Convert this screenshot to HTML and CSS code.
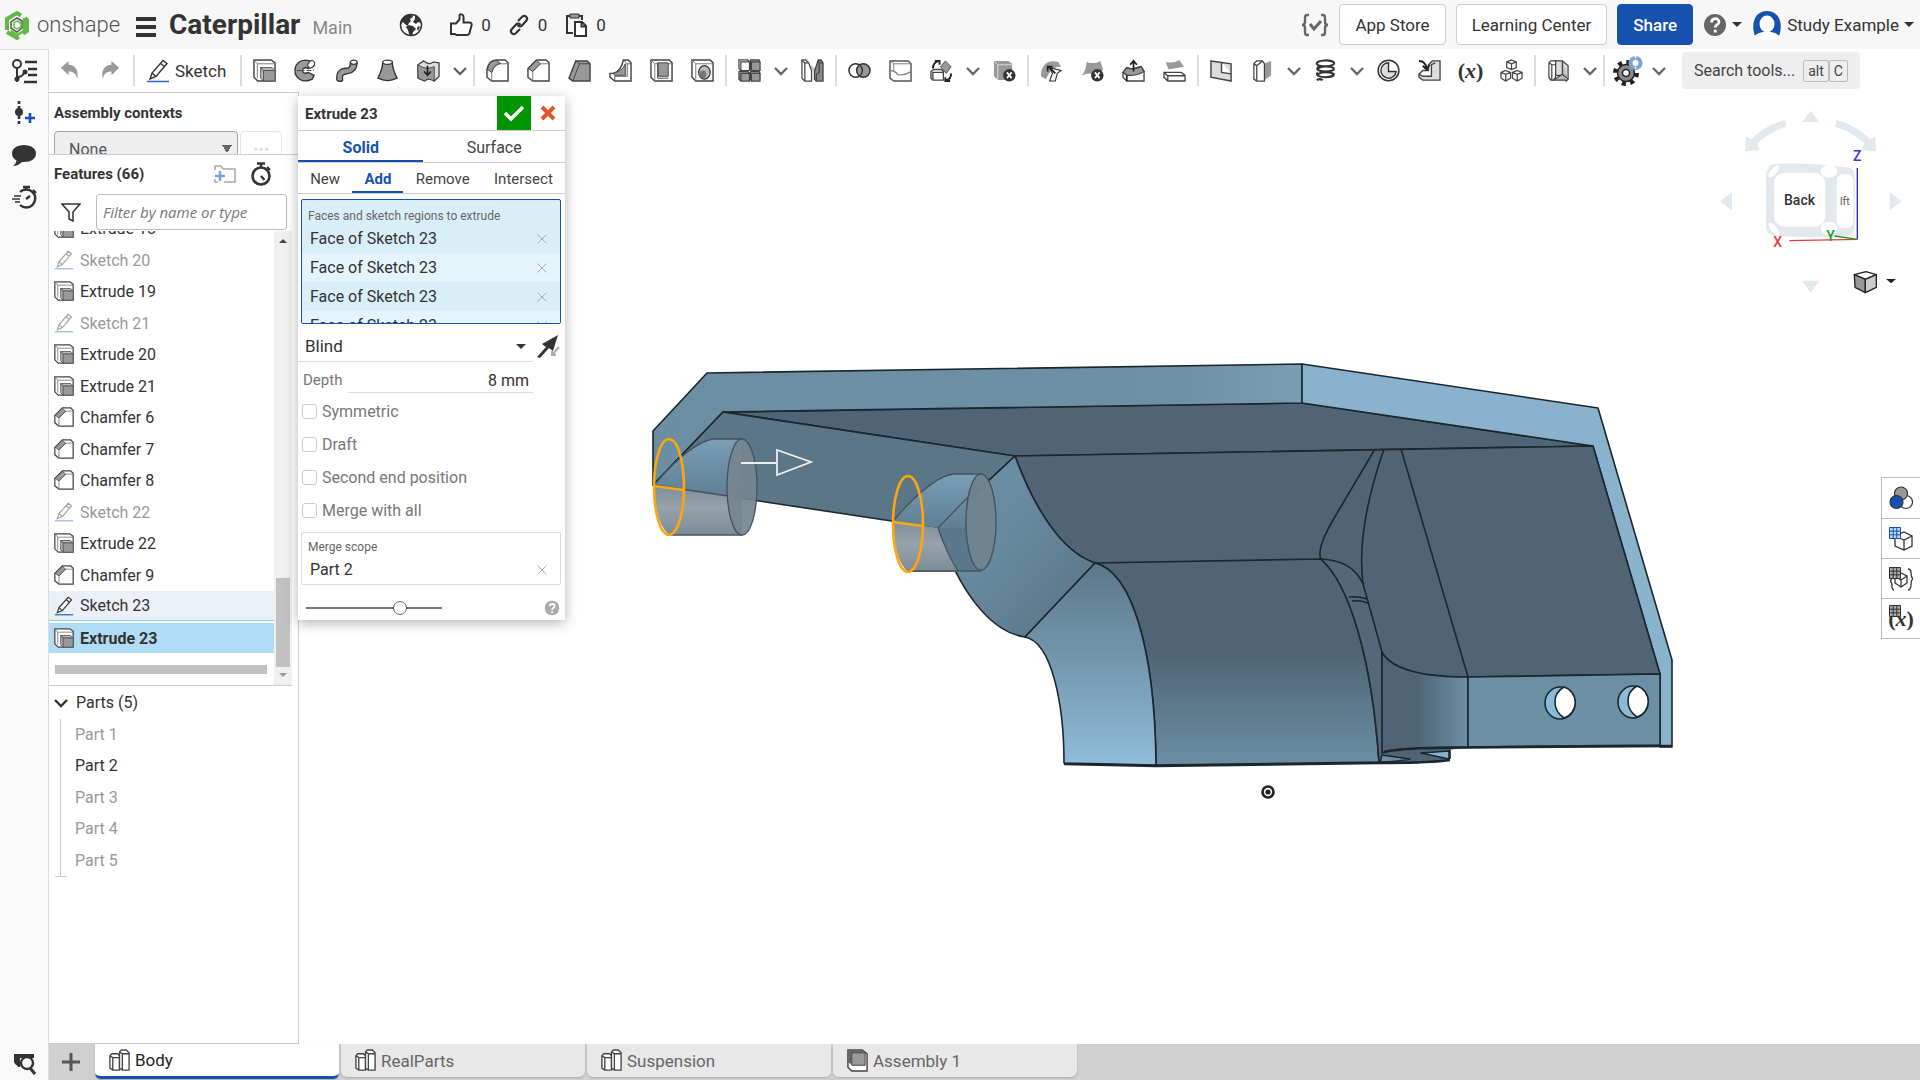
FILE: index.html
```html
<!DOCTYPE html>
<html lang="en">
<head>
    <meta charset="UTF-8" />
    <meta name="viewport" content="width=device-width, initial-scale=1" />
    <title>Caterpillar | Body</title>
    <link rel="stylesheet" href="styles.css">
</head>
<body>
    <!-- shared icons -->
    <svg class="sprite" aria-hidden="true">
        <symbol id="i-chevron" viewBox="0 0 14 14"><path d="M1 4l6 6 6-6" fill="none" stroke="#666" stroke-width="2.4"/></symbol>
        <symbol id="i-sketch" viewBox="0 0 24 24"><path d="M1 22.5h22" stroke="#3b6cc4" stroke-width="1.6"/><path d="M4 20l2-6L17 1.500l4 3L10 17.500zM6 14l4 3.500M14.500 4.500l4 3" fill="#fff" stroke="#333" stroke-width="1.400"/></symbol>
        <symbol id="i-extrude" viewBox="0 0 24 24"><path d="M1 1h18l4 3v19H5l-4-4z" fill="#fff" stroke="#444" stroke-width="1.5"/><path d="M4.500 20V5H23M1 1l3.500 4" fill="none" stroke="#777"/><path d="M8 9l3 3v11l-3-3zM8 9h12l3 3H11z" fill="#bbb" stroke="#555"/><path d="M11 12h12v11H11z" fill="#999" stroke="#555"/></symbol>
        <symbol id="i-chamfer" viewBox="0 0 24 24"><path d="M1 10L10 1h10l3 3v19H6l-5-4z" fill="#fff" stroke="#444" stroke-width="1.500"/><path d="M6 23V13l8-8h9" fill="none" stroke="#777"/><path d="M1.500 10L10 1.500l4 3.500-8 8z" fill="#999" stroke="#444"/></symbol>
        <symbol id="i-part" viewBox="0 0 24 24"><path d="M2 7l2-2h6l2 2v15H5l-3-2zM2 7l3 2h7M5 9v13" fill="#fff" stroke="#444" stroke-width="1.4"/><path d="M12 3l2-2h5l3 3v18h-7l-3-2zM12 3l3 2h7M15 5v17" fill="#fff" stroke="#444" stroke-width="1.400"/></symbol>
        <symbol id="i-stopwatch" viewBox="0 0 24 24"><circle cx="12" cy="14" r="8.500" fill="none" stroke="#333" stroke-width="2.600"/><path d="M8 1.500h8M12 2v4M18 5l3 3M12 14l3.500 4" stroke="#333" stroke-width="2.400"/></symbol>
        <symbol id="i-help" viewBox="0 0 24 24"><circle cx="12" cy="12" r="11"/><path d="M8.500 9.500c0-5 7.500-5 7.500-.5 0 2.800-3.800 2.500-3.800 5.500M12.200 16.800v2.600" fill="none" stroke="#fff" stroke-width="2.700"/></symbol>
        <symbol id="i-x" viewBox="0 0 12 12"><path d="M1.500 1.500l9 9M10.500 1.500l-9 9" fill="none" stroke="currentColor"/></symbol>
        <symbol id="i-grid" viewBox="0 0 12 12"><path d="M.5.5h11v11H.5zM.5 4.200h11M.5 7.800h11M4.200.5v11M7.800.5v11" stroke-width="1"/></symbol>
    </svg>

    <header class="header">
        <a class="brand" href="#" aria-label="onshape">
            <svg width="24" height="32" viewBox="0 0 24 32" fill="none"><path d="M2 21V10L12 4l4 2.500M20 9l2 2v11l-4 2.500M14 28l-2 1-10-6" stroke="#61b846" stroke-width="4"/><path d="M19 9v13l-7 4-6-4" stroke="#61b846" stroke-width="2.500"/><path d="M6 19v-6l6-4 5 3v7l-5 4z" stroke="#555" stroke-width="1.500"/><path d="M12 12l4 2v4l-4 2-3-2v-4z" stroke="#61b846" stroke-width="1.500"/></svg>
            <span>onshape</span>
        </a>
        <button class="menu-btn" aria-label="Document menu"><i></i><i></i><i></i></button>
        <h1>Caterpillar</h1>
        <span class="branch">Main</span>
        <div class="stats">
            <svg class="globe" width="24" height="24" viewBox="0 0 24 24"><circle cx="12" cy="12" r="10.500" fill="#fff" stroke="#333" stroke-width="1.500"/><path d="M4 5c3-3 6-4 9-3l1 2-3 2 1 2-3 3 1 2-3-1-3-3-2 2-1-2zM16 2c4 2 6 5 6 8l-3-1-2 2-3-2 2-3zM9 12l5 1 3 3-3 3-1 4-3-2-1-4-2-3zM19 13l2 1-2 4-1-2z" fill="#333"/></svg>
            <button class="stat"><svg width="24" height="24" viewBox="0 0 24 24"><path d="M2 10.500h5l3.500-4V2.500c0-2 4-1.500 4 1.500v5.500h6c2 0 2.500 1.500 2 3l-2 7.500c-.5 1.500-1.500 2-3 2H7.500L6 21H2z" fill="#fff" stroke="#333" stroke-width="2"/></svg>0</button>
            <button class="stat"><svg width="22" height="24" viewBox="0 0 22 24"><g fill="none" stroke="#333" stroke-width="2.200"><path d="M10 8l4.500-4.500c2.500-2 6 1.500 4 4L14 12.500c-1.500 1.500-3.500 1-4.500-.5"/><path d="M12 16l-4.500 4.500c-2.500 2-6-1.500-4-4L8 11.500c1.500-1.500 3.500-1 4.500.5"/></g></svg>0</button>
            <button class="stat"><svg width="24" height="24" viewBox="0 0 24 24"><path d="M7 3H3v17h6M14 3h4v4" fill="none" stroke="#333" stroke-width="2"/><path d="M6 1h9v4H6z" fill="#999" stroke="#333"/><path d="M11 9h7l4 4v10H11zM17.500 9v4.500H22" fill="#fff" stroke="#333" stroke-width="2"/></svg>0</button>
        </div>
        <div class="header-right">
            <svg width="28" height="24" viewBox="0 0 28 24" fill="none" stroke="#666" stroke-width="2.400"><path d="M8 2H6Q4 2 4 5v4q0 3-3 3 3 0 3 3v4q0 3 2 3h2M20 2h2q2 0 2 3v4q0 3 3 3-3 0-3 3v4q0 3-2 3h-2"/><path d="M9 11l4 5 7-8" stroke-width="3"/></svg>
            <button class="btn">App Store</button>
            <button class="btn">Learning Center</button>
            <button class="btn btn-primary">Share</button>
            <button class="help" aria-label="Help"><svg width="24" height="24" fill="#666"><use href="#i-help"/></svg><b class="caret"></b></button>
            <button class="user"><svg width="30" height="30" viewBox="0 0 30 30"><path d="M3 26C-2 12 4 1 15 1s17 11 12 25z" fill="#1651b0"/><ellipse cx="15" cy="14" rx="7.500" ry="8.500" fill="#fff"/><path d="M2 27c4-7 22-7 26 0q-13 6-26 0z" fill="#fff"/></svg>Study Example<b class="caret"></b></button>
        </div>
    </header>

    <div class="shell">
        <nav class="rail" aria-label="Panels">
            <button aria-label="Feature list"><svg width="26" height="26" viewBox="0 0 26 26" fill="none" stroke="#333" stroke-width="2"><circle cx="6" cy="6" r="4"/><path d="M6 10v14M6 19c5 0 6-2 7-4"/><circle cx="6" cy="21" r="1.500" fill="#333"/><circle cx="14" cy="14" r="1.500" fill="#333"/><path d="M14 4h12M17 11h9M17 17h9M13 24h13" stroke-width="2.600"/></svg></button>
            <button aria-label="Insert"><svg width="26" height="26" viewBox="0 0 26 26"><path d="M8 1v24" stroke="#333" stroke-width="2.600" stroke-dasharray="3 2"/><circle cx="8" cy="12" r="4" fill="#333"/><path d="M14 18h10M19 13v10" stroke="#1651b0" stroke-width="2.600"/></svg></button>
            <button aria-label="Comments"><svg width="26" height="26" viewBox="0 0 26 26"><path d="M13 3c7 0 12 3.500 12 8.500S20 20 13 20h-2c-2 2-5 4-9 4 2-1 3-3 3.500-5.500C3 17 1 15 1 11.500 1 6.500 6 3 13 3z" fill="#333"/></svg></button>
            <button aria-label="History"><svg width="26" height="26" viewBox="0 0 26 26" fill="none" stroke="#333" stroke-width="2.400"><path d="M9 8a9 9 0 1 1 0 13"/><path d="M12 3h7M15 3v3M22 6l3 3M15 15l4-3"/><path d="M3 12h7M1 15h8M4 18h5" stroke-width="1.400"/></svg></button>
            <button class="rail-bottom" aria-label="Find"><svg width="24" height="24" viewBox="0 0 24 24"><path d="M2 3h20v4H8v9H6c0-2-4-2-4-6z" fill="#333"/><circle cx="15" cy="12" r="6" fill="#fafafa" stroke="#333" stroke-width="2.400"/><path d="M18 17l5 6" stroke="#333" stroke-width="3"/></svg></button>
        </nav>

        <div class="content">
            <div class="toolbar">
                <button class="tool"><svg viewBox="0 0 24 24"><path d="M3 9l8-7v4c7 0 11 6 9 15-1-6-4-8-9-8v4z" fill="#999"/></svg></button>
                <button class="tool"><svg viewBox="0 0 24 24"><path d="M21 9l-8-7v4C6 6 2 12 4 21c1-6 4-8 9-8v4z" fill="#999"/></svg></button>
                <span class="sep"></span>
                <button class="tool-sketch"><svg width="24" height="24"><use href="#i-sketch"/></svg>Sketch</button>
                <span class="sep"></span>
                <button class="tool"><svg><use href="#i-extrude"/></svg></button>
                <button class="tool"><svg viewBox="0 0 24 24"><path d="M19 3C9-2 1 4 1 12s8 14 18 9l2-4-6-3c-4 2-6 0-6-2s2-4 6-2l6-3z" fill="#999" stroke="#333" stroke-width="1.400"/><ellipse cx="18" cy="5.500" rx="3" ry="4" fill="#fff" stroke="#333" transform="rotate(40 18 5.500)"/><path d="M3 12h20" stroke="#444" stroke-dasharray="5 2 1 2"/></svg></button>
                <button class="tool"><svg viewBox="0 0 24 24"><path d="M16 4c0 7-3 5-8 6-5 2-7 5-6 12 2 2 5 2 6 0-1-6 1-6 6-7 6-1 9-4 9-11z" fill="#999" stroke="#333" stroke-width="1.400"/><ellipse cx="19.500" cy="3.500" rx="3.500" ry="2.200" fill="#fff" stroke="#333" stroke-width="1.300"/></svg></button>
                <button class="tool"><svg viewBox="0 0 24 24"><path d="M7 3c0 6-2 11-5 17q10 5 20 0C19 14 17 9 17 3z" fill="#999" stroke="#333" stroke-width="1.400"/><ellipse cx="12" cy="3.500" rx="5" ry="2.200" fill="#fff" stroke="#333" stroke-width="1.300"/></svg></button>
                <button class="tool"><svg viewBox="0 0 24 24"><path d="M1 6l6-4q6 5 10 1l6 1v14l-5 5q-6-4-10 0l-7-3z" fill="#ddd" stroke="#444" stroke-width="1.400"/><path d="M1 6q8 6 17 2v15q-8-4-10 0l-7-3z" fill="#999" stroke="#444"/><path d="M11 7v10M7.500 13l3.500 4 3.500-4" fill="none" stroke="#222" stroke-width="1.800"/></svg></button>
                <button class="more"><svg><use href="#i-chevron"/></svg></button>
                <span class="sep"></span>
                <button class="tool"><svg viewBox="0 0 24 24"><path d="M1 11Q3 1 11 1h9l3 3v19H6l-5-4z" fill="#fff" stroke="#444" stroke-width="1.500"/><path d="M6 23V14q2-8 9-9h8" fill="none" stroke="#777"/><path d="M1.500 11Q3 1.500 11 1.500l4 3Q8 6 6 14z" fill="#999" stroke="#444"/></svg></button>
                <button class="tool"><svg><use href="#i-chamfer"/></svg></button>
                <button class="tool"><svg viewBox="0 0 24 24"><path d="M1 20L8 2h12l3 3v18H5z" fill="#999" stroke="#444" stroke-width="1.500"/><path d="M5 23L12 5h11M8 2l4 3" fill="none" stroke="#444"/></svg></button>
                <button class="tool"><svg viewBox="0 0 24 24"><path d="M15 1h5l3 3v19H6l-5-4v-4h4Q13 12 15 1z" fill="#fff" stroke="#444" stroke-width="1.500"/><path d="M17 5v12H6l-2-2Q14 13 17 5z" fill="#999" stroke="#444"/><path d="M6 23v-5h13V5h4M15 1l4 4" fill="none" stroke="#555"/></svg></button>
                <button class="tool"><svg viewBox="0 0 24 24"><path d="M1 1h19l3 3v19H5l-4-4z" fill="#fff" stroke="#444" stroke-width="1.500"/><path d="M5 23V5h18M1 1l4 4" fill="none" stroke="#777"/><path d="M8 4h11v14H9z" fill="#999" stroke="#444"/><path d="M8 4v16h11" fill="none" stroke="#444"/></svg></button>
                <button class="tool"><svg viewBox="0 0 24 24"><path d="M1 1h19l3 3v19H5l-4-4z" fill="#fff" stroke="#444" stroke-width="1.500"/><path d="M5 23V5h18M1 1l4 4" fill="none" stroke="#777"/><ellipse cx="14" cy="14" rx="6" ry="7" fill="#bbb" stroke="#333" stroke-width="1.300"/><ellipse cx="12.500" cy="16" rx="3.500" ry="4" fill="#777"/></svg></button>
                <span class="sep"></span>
                <button class="tool"><svg viewBox="0 0 24 24" stroke="#444" stroke-width="1.300"><path d="M1 1h9l2 2v9H3l-2-2z" fill="#fff"/><path d="M13 1h9l1 2v9H14l-1-2zM1 13h9l2 2v8H3l-2-2zM13 13h9l1 2v8h-9l-1-2z" fill="#999"/><path d="M3 12V3h9M14 12V3h9M3 23v-8h9M14 23v-8h9" fill="none"/></svg></button>
                <button class="more"><svg><use href="#i-chevron"/></svg></button>
                <button class="tool"><svg viewBox="0 0 24 24" stroke="#444" stroke-width="1.300"><path d="M10 6l7 6v4l-6-5z" fill="#ccc" stroke="none"/><path d="M1 1h4l3 3 3 8v11H4l-3-3z" fill="#fff"/><path d="M4 23V4M1 1l3 3h4" fill="none"/><path d="M18 1h3l2 3v19h-7l-2-2v-8z" fill="#888"/><path d="M18 1l1 3v10l-3 2v7M19 4h4" fill="none"/></svg></button>
                <span class="sep"></span>
                <button class="tool"><svg viewBox="0 0 24 24"><circle cx="8" cy="12" r="7" fill="#fff"/><circle cx="16" cy="12" r="7" fill="#999" stroke="#333" stroke-width="1.600"/><circle cx="8" cy="12" r="7" fill="none" stroke="#333" stroke-width="1.600"/></svg></button>
                <button class="tool"><svg viewBox="0 0 24 24"><path d="M1 2h19l3 3v18H5l-4-3z" fill="#fff" stroke="#555" stroke-width="1.500"/><path d="M1 2l4 3h18M5 5v7" fill="none" stroke="#777"/><path d="M1 12q5 0 8 4 6 2 14-3" fill="none" stroke="#888" stroke-width="1.500"/></svg></button>
                <button class="tool"><svg viewBox="0 0 24 24"><path d="M1 13l3-2h8l2 2v9H3l-2-2zM3 22v-8h11" fill="#fff" stroke="#444" stroke-width="1.400"/><path d="M16 2l6 6-5 7-6-7z" fill="#999" stroke="#555"/><path d="M3 10Q3 4 9 2M5 2h5v4M22 15q0 6-5 7M21 23h-5v-4" fill="none" stroke="#222" stroke-width="2"/></svg></button>
                <button class="more"><svg><use href="#i-chevron"/></svg></button>
                <button class="tool"><svg viewBox="0 0 24 24"><path d="M1 2h15l4 3v17H5l-4-4z" fill="#999"/><path d="M5 22V6h15M1 2l4 4" fill="none" stroke="#ddd"/><circle cx="17" cy="17" r="6.500" fill="#333"/><path d="M14.500 14l5 6M19.500 14l-5 6" stroke="#fff" stroke-width="1.800"/></svg></button>
                <span class="sep"></span>
                <button class="tool"><svg viewBox="0 0 24 24"><path d="M1 18C1 6 8 0 19 3l3 5q-9 0-12 6l-4 7z" fill="#999"/><path d="M10 9l12 3-4 3-2 8-6 0 3-8z" fill="#fff" stroke="#333" stroke-width="1.200"/><path d="M16 15L9 8M8 13V8h5" fill="none" stroke="#222" stroke-width="1.800"/></svg></button>
                <button class="tool"><svg viewBox="0 0 24 24"><path d="M6 3q8 3 14-1l3 9q-3 6-8 6-6-4-14 0 4-5 5-14z" fill="#999"/><circle cx="17" cy="17" r="6.500" fill="#333"/><path d="M14.500 14l5 6M19.500 14l-5 6" stroke="#fff" stroke-width="1.800"/></svg></button>
                <button class="tool"><svg viewBox="0 0 24 24" stroke="#444" stroke-width="1.400"><path d="M1 14l4-5q6 3 10 0l5-1 3 5v10H5l-4-4z" fill="#fff"/><path d="M1 14l4-5q6 3 15-1l3 5q-8 5-18 4z" fill="#999"/><path d="M5 17v6M12 13V3M8.500 6L12 2l3.500 4" fill="none" stroke="#222" stroke-width="1.800"/></svg></button>
                <button class="tool"><svg viewBox="0 0 24 24"><path d="M3 3q8 2 14-2l5 7q-8 1-16 3-2-4-3-8z" fill="#999"/><path d="M1 14h18l4 3v6H5l-4-4zM1 14l4 3.500h18M5 17.500V23" fill="#fff" stroke="#444" stroke-width="1.400"/></svg></button>
                <span class="sep"></span>
                <button class="tool"><svg viewBox="0 0 24 24"><path d="M1 2l21 3v18L1 19zM12 3.500v10.500l10 1.500" fill="#ddd" stroke="#444" stroke-width="1.500"/></svg></button>
                <button class="tool"><svg viewBox="0 0 24 24"><path d="M13 5l8-3v15l-8 6z" fill="#999"/><path d="M3 5l3-3h6l2 3v18H6l-3-2zM3 5l3 2v16M6 7l6-5" fill="#fff" stroke="#444" stroke-width="1.300"/></svg></button>
                <button class="more"><svg><use href="#i-chevron"/></svg></button>
                <button class="tool"><svg viewBox="0 0 24 24" fill="none" stroke="#333" stroke-width="2.200"><path d="M21 4C18 0 2 1 3 5s19 3 18-1M5 8C2 10 3 13 12 13s9-2 9-3M4 14c-3 3 2 5 8 5s9-2 9-4M21 10C18 7 5 7 4 11M21 16C17 13 5 13 4 17M3 22q3-2 6 0"/></svg></button>
                <button class="more"><svg><use href="#i-chevron"/></svg></button>
                <button class="tool"><svg viewBox="0 0 24 24" stroke="#333"><circle cx="12" cy="12" r="10.800" fill="#fff" stroke-width="1.600"/><path d="M12 4a8 8 0 1 0 8 9h-8z" fill="#ddd" stroke-width="1.500"/></svg></button>
                <button class="tool"><svg viewBox="0 0 24 24"><path d="M1 16l4-4h6V6l4-4h8v20H5l-4-3zM1 16l4 2h9V6l4-2" fill="#ddd" stroke="#444" stroke-width="1.400"/><path d="M1 2q7 0 8 8M5 7l4 4 3-5" fill="none" stroke="#222" stroke-width="2"/></svg></button>
                <button class="tool variable">(<i>x</i>)</button>
                <button class="tool"><svg viewBox="0 0 24 24" fill="#fff" stroke="#444" stroke-width="1.300"><path d="M12 1l5 2v6l-5 2-5-2V3zM7 3l5 2 5-2M12 5v6M6 12l5 2v6l-5 3-5-3v-6zM1 14l5 2 5-2M6 16v7M18 12l5 2v6l-5 3-5-3v-6zM13 14l5 2 5-2M18 16v7"/></svg></button>
                <span class="sep"></span>
                <button class="tool"><svg viewBox="0 0 24 24" stroke="#444" stroke-width="1.300"><path d="M8 2h8l6 5v14l-2 2-6-6H8z" fill="#ddd"/><path d="M2 4l2-2h5v17l-2 3H4l-2-3zM2 4l3 2h4M5 6v16" fill="#fff"/><path d="M16 2v14l6 5M16 16l-9 6h12" fill="#bbb"/></svg></button>
                <button class="more"><svg><use href="#i-chevron"/></svg></button>
                <span class="sep"></span>
                <button class="tool gear"><svg viewBox="0 0 30 30"><circle cx="13" cy="17" r="10.500" fill="none" stroke="#222" stroke-width="5" stroke-dasharray="4 4.250"/><circle cx="13" cy="17" r="8.500" fill="#888" stroke="#222" stroke-width="1.500"/><circle cx="13" cy="17" r="3.500" fill="#fff" stroke="#222" stroke-width="1.500"/><circle cx="22.500" cy="7" r="7" fill="#7ba3d4"/><circle cx="22.500" cy="7" r="3" fill="#fff"/><path d="M22.500 0v14" stroke="#fff" stroke-width="1.500" stroke-dasharray="2 1.500"/></svg></button>
                <button class="more"><svg><use href="#i-chevron"/></svg></button>
                <button class="search">Search tools... <kbd>alt</kbd><kbd>C</kbd></button>
            </div>

            <main class="work">
                <aside class="panel">
                    <section class="contexts">
                        <h2>Assembly contexts</h2>
                        <div class="context-row">
                            <select aria-label="Assembly context"><option>None</option></select>
                            <button aria-label="More">•••</button>
                        </div>
                    </section>

                    <section class="features">
                        <div class="features-head">
                            <h2>Features (66)</h2>
                            <button aria-label="New folder"><svg width="24" height="20" viewBox="0 0 24 20" fill="none"><path d="M2 6V2h6l2 3h12v13H11M2 15v3h3" stroke="#aaa" stroke-width="1.600"/><path d="M2 12h10M7 7v10" stroke="#7ba0dc" stroke-width="2.600"/></svg></button>
                            <button aria-label="Regeneration times"><svg width="24" height="24"><use href="#i-stopwatch"/></svg></button>
                        </div>
                        <div class="filter-row">
                            <svg width="20" height="20" viewBox="0 0 20 20"><path d="M1 2h18l-7 8v9l-4-2v-7z" fill="none" stroke="#333" stroke-width="1.500"/></svg>
                            <input type="text" placeholder="Filter by name or type" aria-label="Filter by name or type" />
                        </div>
                        <div class="feature-scroll">
                            <div class="feature-list">
                                <ul>
                                    <li><svg><use href="#i-extrude"/></svg>Extrude 18</li>
                                    <li class="hidden-item"><svg><use href="#i-sketch"/></svg>Sketch 20</li>
                                    <li><svg><use href="#i-extrude"/></svg>Extrude 19</li>
                                    <li class="hidden-item"><svg><use href="#i-sketch"/></svg>Sketch 21</li>
                                    <li><svg><use href="#i-extrude"/></svg>Extrude 20</li>
                                    <li><svg><use href="#i-extrude"/></svg>Extrude 21</li>
                                    <li><svg><use href="#i-chamfer"/></svg>Chamfer 6</li>
                                    <li><svg><use href="#i-chamfer"/></svg>Chamfer 7</li>
                                    <li><svg><use href="#i-chamfer"/></svg>Chamfer 8</li>
                                    <li class="hidden-item"><svg><use href="#i-sketch"/></svg>Sketch 22</li>
                                    <li><svg><use href="#i-extrude"/></svg>Extrude 22</li>
                                    <li><svg><use href="#i-chamfer"/></svg>Chamfer 9</li>
                                    <li class="hovered"><svg><use href="#i-sketch"/></svg>Sketch 23</li>
                                    <li class="selected"><svg><use href="#i-extrude"/></svg>Extrude 23</li>
                                </ul>
                                <div class="rollback"></div>
                            </div>
                            <div class="scrollbar"><b class="up"></b><span></span><b class="down"></b></div>
                        </div>
                    </section>

                    <section class="parts">
                        <h3><svg width="14" height="14" viewBox="0 0 14 14"><path d="M1 4l6 6 6-6" fill="none" stroke="#333" stroke-width="2.400"/></svg>Parts (5)</h3>
                        <ul>
                            <li>Part 1</li>
                            <li class="visible">Part 2</li>
                            <li>Part 3</li>
                            <li>Part 4</li>
                            <li>Part 5</li>
                        </ul>
                    </section>
                </aside>

                <div class="viewport">
                    <svg class="model" viewBox="299 92 1621 952">
                        <defs>
                            <linearGradient id="gTop" x1="0" x2="1"><stop offset="0" stop-color="#6b8ea3"/><stop offset=".8" stop-color="#6d90a5"/><stop offset="1" stop-color="#7a9db3"/></linearGradient>
                            <linearGradient id="gBody" x1="0" y1="0" x2="0" y2="1"><stop offset="0" stop-color="#4f6575"/><stop offset=".45" stop-color="#4f6575"/><stop offset="1" stop-color="#6b8ea4"/></linearGradient>
                            <linearGradient id="gSide" x1="0" y1="0" x2="0" y2="1"><stop offset="0" stop-color="#5c7889"/><stop offset=".5" stop-color="#7598af"/><stop offset="1" stop-color="#90bdd8"/></linearGradient>
                            <linearGradient id="gFlare" x1="0" y1="0" x2="1" y2="1"><stop offset="0" stop-color="#6f94ac"/><stop offset=".5" stop-color="#66879b"/><stop offset="1" stop-color="#587283"/></linearGradient>
                            <linearGradient id="gCorner" x1="0" x2="1"><stop offset="0" stop-color="#4f6575"/><stop offset=".4" stop-color="#4f6575"/><stop offset="1" stop-color="#6c8fa4"/></linearGradient>
                            <linearGradient id="gCyl" x1="0" y1="0" x2="0" y2="1"><stop offset="0" stop-color="#7a9fb7"/><stop offset="1" stop-color="#5e7e93"/></linearGradient>
                            <linearGradient id="gLow" x1="0" y1="0" x2="0" y2="1"><stop offset="0" stop-color="#7d8e9a"/><stop offset=".45" stop-color="#97a3aa"/><stop offset="1" stop-color="#7b8c97"/></linearGradient>
                        </defs>
                        <g stroke="#1b262d" stroke-width="1.600" stroke-linejoin="round">
                            <path d="M723 412L1302 403 1593 446 1015 456z" fill="#4f6575"/>
                            <path d="M653 431L707 373 1302 364V403L723 412 653 485z" fill="url(#gTop)"/>
                            <path d="M1302 364L1598 408 1672 660V747H1660V674L1593 446 1302 403z" fill="#89b3cd"/>
                            <path d="M653 485L723 412 1015 456 938 528z" fill="#5b7687"/>
                            <path d="M1015 456L1593 446 1660 674 1468 677 1382 700 1155 765 1095 563C1062 552 1035 510 1015 456z" fill="#4f6575"/>
                            <path d="M1095 563L1321 559C1350 585 1372 660 1379 762L1156 765C1155 650 1132 572 1095 563z" fill="url(#gBody)"/>
                            <path d="M1015 456C1035 510 1062 552 1095 563L1025 637C990 632 958 590 938 528z" fill="url(#gFlare)"/>
                            <path d="M1095 563C1132 572 1155 650 1156 765L1064 763C1064 705 1052 642 1025 637z" fill="url(#gSide)"/>
                            <path d="M1321 559C1350 585 1372 660 1379 762H1383L1382 652C1376 630 1369 605 1363 584 1356 568 1343 560 1321 559z" fill="#53697a"/>
                            <path d="M1375 449L1333 520Q1316 550 1321 559M1384 449Q1356 530 1363 584M1401 449L1468 677M1349 597q9-1 18 2M1352 601q8-1 16 2" fill="none"/>
                            <path d="M1382 752L1468 746 1450 750V760Q1430 763 1379 764z" fill="#4f6575" stroke="none"/>
                            <path d="M1382 755q14 2 28 4-14 3-30 3z" fill="#6c8fa4"/>
                            <path d="M1421 753l28-2v8z" fill="#89b3cd"/>
                            <path d="M1450 750v9" fill="none"/>
                            <path d="M1382 652C1393 672 1430 677 1468 677V747Q1390 747 1382 753z" fill="url(#gCorner)"/>
                            <path d="M1468 677L1660 674V745L1468 747z" fill="#6c8fa4"/>
                            <path d="M1064 764L1156 766 1379 763Q1430 763 1450 760M1384 752Q1400 748 1468 747.500L1672 746" fill="none" stroke-width="2.500"/>
                        </g>
                        <g stroke="#1b262d" stroke-width="1.600">
                            <ellipse cx="1560" cy="703" rx="15" ry="16" fill="#8bbad6"/>
                            <path d="M1564 687a15 16 0 0 1 0 31q-9-6-9-16t9-15z" fill="#fff"/>
                            <ellipse cx="1633" cy="702" rx="15" ry="16" fill="#8bbad6"/>
                            <path d="M1637 686a15 16 0 0 1 0 31q-9-6-9-16t9-15z" fill="#fff"/>
                        </g>
                        <!-- extrude preview -->
                        <g stroke="#46535c" stroke-width="1.300">
                            <path d="M654 485L742 498V535H669q-14-12-15-50z" fill="url(#gLow)" stroke="none"/>
                            <path d="M742 535H669" fill="none"/>
                            <path d="M654 485Q690 443 713 439h29v59z" fill="url(#gCyl)" stroke="none"/>
                            <path d="M654 485Q690 443 713 439h29M654 485l74 11" fill="none"/>
                            <ellipse cx="742" cy="487" rx="15" ry="48" fill="#748690" fill-opacity=".92"/>
                            <path d="M893 521l45 7 20 44h-50q-14-12-15-51z" fill="url(#gLow)" stroke="none"/>
                            <path d="M938 528q9 26 20 43h23q-16-12-15-50z" fill="#5a788c" stroke="none"/>
                            <path d="M981 571h-73" fill="none"/>
                            <path d="M893 521q39-45 61-47h27q-15 6-15 54h-28z" fill="url(#gCyl)" stroke="none"/>
                            <path d="M893 521q39-45 61-47h27M938 528l30-31M938 528q9 26 20 43" fill="none"/>
                            <ellipse cx="981" cy="522" rx="15" ry="48" fill="#6f848f" fill-opacity=".94"/>
                        </g>
                        <g fill="none" stroke="#ffa60d" stroke-width="2.600">
                            <ellipse cx="669" cy="487" rx="15" ry="48"/>
                            <path d="M654 486l30 4"/>
                            <ellipse cx="908" cy="524" rx="15" ry="48"/>
                            <path d="M893 522l30 4"/>
                        </g>
                        <path d="M741 463h36M777 450v25l34-13z" fill="none" stroke="#eee" stroke-width="1.800"/>
                        <circle cx="1268" cy="792" r="5.500" fill="#fff" stroke="#222" stroke-width="2.600"/>
                        <circle cx="1268" cy="792" r="2.600" fill="#222"/>
                    </svg>

                    <form class="dialog">
                        <div class="dialog-head">
                            <h2>Extrude 23</h2>
                            <button type="button" class="accept" aria-label="Accept"><svg width="22" height="22" viewBox="0 0 22 22"><path d="M2 11l6 6L20 5" fill="none" stroke="#fff" stroke-width="3.600"/></svg></button>
                            <button type="button" class="cancel" aria-label="Cancel"><svg width="16" height="16" viewBox="0 0 16 16"><path d="M2 2l12 12M14 2L2 14" stroke="#e0552b" stroke-width="4"/></svg></button>
                        </div>
                        <div class="tabs type-tabs">
                            <button type="button" class="active">Solid</button>
                            <button type="button">Surface</button>
                        </div>
                        <div class="tabs op-tabs">
                            <button type="button">New</button>
                            <button type="button" class="active">Add</button>
                            <button type="button">Remove</button>
                            <button type="button">Intersect</button>
                        </div>
                        <div class="query query-active">
                            <p>Faces and sketch regions to extrude</p>
                            <ul>
                                <li>Face of Sketch 23<svg><use href="#i-x"/></svg></li>
                                <li>Face of Sketch 23<svg><use href="#i-x"/></svg></li>
                                <li>Face of Sketch 23<svg><use href="#i-x"/></svg></li>
                                <li>Face of Sketch 23<svg><use href="#i-x"/></svg></li>
                            </ul>
                        </div>
                        <div class="end-type">
                            <select aria-label="End type"><option>Blind</option></select>
                            <b class="caret"></b>
                            <button type="button" aria-label="Flip direction"><svg width="24" height="24" viewBox="0 0 24 24"><path d="M1 23l9-10-4-3L22 1l-5 16-4-3-9 10z" fill="#333"/><path d="M23 13l-7 8M16 17v4h4" fill="none" stroke="#aaa" stroke-width="2"/></svg></button>
                        </div>
                        <div class="depth">
                            <label for="depth">Depth</label>
                            <input type="text" id="depth" value="8 mm" />
                        </div>
                        <label class="check"><input type="checkbox" />Symmetric</label>
                        <label class="check"><input type="checkbox" />Draft</label>
                        <label class="check"><input type="checkbox" />Second end position</label>
                        <label class="check"><input type="checkbox" />Merge with all</label>
                        <div class="query">
                            <p>Merge scope</p>
                            <ul>
                                <li>Part 2<svg><use href="#i-x"/></svg></li>
                            </ul>
                        </div>
                        <div class="dialog-foot">
                            <input type="range" min="0" max="100" value="71" aria-label="Preview opacity" />
                            <svg width="16" height="16" fill="#aaa"><use href="#i-help"/></svg>
                        </div>
                    </form>

                    <div class="view-cube">
                        <svg width="220" height="210" viewBox="0 0 660 630">
                            <g fill="#e1e8ee">
                                <path d="M332 32l26 34h-52zM332 578l26-36h-52zM60 304l36-27v54zM605 304l-36-27v54z"/>
                                <path d="M255 60l5 20q-50 14-88 50l6 20-42 4 2-44 16 8q40-42 101-58zM410 60l-5 20q50 14 88 50l-8 20 43 4-2-44-16 8q-40-42-100-58z"/>
                                <path d="M222 192q100-6 222 10 18 4 20 24v158q-2 20-26 24-110 6-214 0-24-4-26-28V226q2-30 24-34z"/>
                            </g>
                            <g fill="#fff">
                                <rect x="222" y="218" width="154" height="162" rx="32"/>
                                <rect x="410" y="222" width="50" height="162" rx="20"/>
                                <ellipse cx="387" cy="214" rx="25" ry="19"/>
                                <ellipse cx="387" cy="385" rx="25" ry="20"/>
                                <ellipse cx="222" cy="214" rx="9" ry="23" transform="rotate(40 222 214)"/>
                                <ellipse cx="222" cy="387" rx="9" ry="23" transform="rotate(-40 222 387)"/>
                            </g>
                            <text x="252" y="316" font-size="42" font-weight="500" fill="#333">Back</text>
                            <text x="420" y="316" font-size="32" fill="#555">lft</text>
                            <path d="M472 204v214" stroke="#2a22d0" stroke-width="4"/>
                            <path d="M472 418l-204 4" stroke="#e04040" stroke-width="4"/>
                            <path d="M472 418l-68-10" stroke="#1a9a1a" stroke-width="4"/>
                            <g font-size="42" font-weight="500">
                                <text x="459" y="184" fill="#3a32e0">Z</text>
                                <text x="220" y="440" fill="#e04040">X</text>
                                <text x="379" y="422" fill="#1a9a1a">Y</text>
                            </g>
                            <g stroke="#222" stroke-width="4" stroke-linejoin="round"><path d="M463 524l35-9 31 9-33 14z" fill="#fff"/><path d="M463 524l33 14v40l-31-16z" fill="#999"/><path d="M529 524l-33 14v40l33-16z" fill="#ccc"/></g>
                            <path d="M558 537h30l-15 13z" fill="#222"/>
                        </svg>
                    </div>

                    <div class="side-tabs">
                        <button aria-label="Appearance"><svg viewBox="0 0 24 24" stroke="#333" stroke-width="1.200"><circle cx="17" cy="16" r="6.500" fill="#fff"/><circle cx="12" cy="7.500" r="6.500" fill="#999"/><circle cx="7.500" cy="16" r="6.500" fill="#1651b0"/></svg></button>
                        <button aria-label="Configurations"><svg viewBox="0 0 24 24"><path d="M15 5l8 4v10l-8 4-9-4V9zM6 9l9 4 8-4M15 13v10" fill="none" stroke="#333" stroke-width="1.300"/><use href="#i-grid" width="12" height="12" fill="#bcd8f5" stroke="#1651b0"/></svg></button>
                        <button aria-label="Custom tables"><svg viewBox="0 0 24 24"><path d="M12 6l6 3v7l-6 4-6-4V9zM6 9l6 4 6-4M12 13v7M3 10q-1 4-2 4 2 1 2 5t2 4M19 2q3 0 3 4t2 6q-2 1-2 6t-3 5" fill="none" stroke="#333" stroke-width="1.300"/><use href="#i-grid" width="12" height="12" fill="#aaa" stroke="#333"/></svg></button>
                        <button class="variable" aria-label="Variables">(<i>x</i>)<svg class="corner-grid" width="12" height="12" fill="#aaa" stroke="#333"><use href="#i-grid"/></svg></button>
                    </div>
                </div>
            </main>

            <footer class="doc-tabs">
                <button class="add" aria-label="New tab"><svg width="20" height="20" viewBox="0 0 20 20"><path d="M10 1v18M1 10h18" stroke="#555" stroke-width="3"/></svg></button>
                <a href="#" class="active"><svg><use href="#i-part"/></svg>Body</a>
                <a href="#"><svg><use href="#i-part"/></svg>RealParts</a>
                <a href="#"><svg><use href="#i-part"/></svg>Suspension</a>
                <a href="#"><svg viewBox="0 0 24 24"><path d="M2 1h15l5 4v18H6l-4-4z" fill="#fff" stroke="#444" stroke-width="1.500"/><path d="M2 1h15l3 3H6v12l-4-2z" fill="#666"/><path d="M6 4h14v13H6z" fill="#999" stroke="#444"/></svg>Assembly 1</a>
            </footer>
        </div>
    </div>
</body>
</html>
```
FILE: styles.css
```css
:root {
    --blue: #1651b0;
    --text: #333;
    --muted: #999;
    --line: #ccc;
}

* {
    box-sizing: border-box;
}

body {
    display: flex;
    flex-direction: column;
    height: 100vh;
    margin: 0;
    overflow: hidden;
    font-family: Roboto, "Liberation Sans", sans-serif;
    font-size: 16px;
    color: var(--text);
    background: #fff;
}

button {
    display: flex;
    align-items: center;
    justify-content: center;
    padding: 0;
    border: none;
    background: none;
    font: inherit;
    color: inherit;
    cursor: pointer;
}

a {
    color: inherit;
    text-decoration: none;
}

h1, h2, h3, p, ul {
    margin: 0;
    padding: 0;
}

ul {
    list-style: none;
}

svg {
    flex: none;
}

.sprite {
    position: absolute;
    width: 0;
    height: 0;
}

.caret {
    width: 0;
    height: 0;
    border: 5px solid transparent;
    border-top-color: #333;
    border-bottom: none;
}

/* header */
.header {
    display: flex;
    flex: none;
    align-items: center;
    height: 49px;
    padding-left: 5px;
    background: #f7f7f7;
}

.brand {
    display: flex;
    align-items: center;
    gap: 8px;
    width: 131px;
    font-size: 22px;
    font-weight: 300;
    color: #555;
}

.menu-btn {
    flex-direction: column;
    gap: 4px;
    width: 20px;
    margin-top: 4px;
}

.menu-btn i {
    width: 20px;
    height: 4px;
    background: #333;
}

.header h1 {
    margin-left: 13px;
    font-size: 28px;
    font-weight: 700;
}

.branch {
    margin: 6px 0 0 12px;
    font-size: 18px;
    color: #888;
}

.stats {
    display: flex;
    align-items: center;
    margin-left: 47px;
    font-size: 17px;
}

.globe {
    margin-right: 26px;
}

.stat {
    gap: 8px;
    margin-right: 17px;
}

.header-right {
    display: flex;
    align-items: center;
    gap: 10px;
    margin-left: auto;
    padding-right: 6px;
    font-size: 17px;
}

.btn {
    height: 41px;
    padding: 0 15px;
    border: 1px solid #ccc;
    border-radius: 4px;
    background: #fff;
}

.btn-primary {
    border-color: var(--blue);
    background: var(--blue);
    color: #fff;
    font-weight: 500;
}

.help,
.user {
    gap: 5px;
}

/* left rail */
.shell {
    display: flex;
    flex: 1;
    min-height: 0;
}

.rail {
    display: flex;
    flex: none;
    flex-direction: column;
    align-items: center;
    width: 49px;
    border-top: 1px solid #ddd;
    border-right: 1px solid #ddd;
    background: #fafafa;
}

.rail button {
    width: 48px;
    height: 42px;
}

.rail .rail-bottom {
    height: 34px;
    margin-top: auto;
}

.content {
    display: flex;
    flex: 1;
    flex-direction: column;
    min-width: 0;
}

/* toolbar */
.toolbar {
    display: flex;
    flex: none;
    align-items: center;
    height: 43px;
}

.tool {
    flex: none;
    width: 41px;
    height: 36px;
}

.tool svg {
    width: 23px;
    height: 23px;
}

.gear svg {
    width: 30px;
    height: 30px;
}

.more {
    flex: none;
    width: 22px;
    height: 36px;
}

.more svg {
    width: 14px;
    height: 14px;
}

.sep {
    flex: none;
    width: 2px;
    height: 31px;
    margin: 0 2px;
    background: #ddd;
}

.tool-sketch {
    gap: 5px;
    justify-content: flex-start;
    width: 101px;
    padding-left: 9px;
    font-size: 17px;
}

.variable {
    font-family: "Liberation Serif", serif;
    font-size: 22px;
    font-weight: 700;
}

.search {
    flex: none;
    justify-content: flex-start;
    width: 178px;
    height: 37px;
    margin-left: 12px;
    padding-left: 12px;
    border-radius: 4px;
    background: #eee;
    color: #444;
}

.search kbd {
    height: 22px;
    padding: 0 4px;
    border: 1px solid #bbb;
    border-radius: 2px;
    font-family: inherit;
    font-size: 14px;
    line-height: 20px;
}

.search kbd:first-of-type {
    margin-left: 8px;
}

/* feature panel */
.work {
    display: flex;
    flex: 1;
    min-height: 0;
}

.panel {
    flex: none;
    width: 250px;
    border: 1px solid var(--line);
    border-left: none;
}

.panel h2 {
    font-size: 15px;
    font-weight: 700;
}

.contexts {
    height: 62px;
    padding: 11px 0 0 5px;
    border-bottom: 1px solid var(--line);
    overflow: hidden;
}

.context-row {
    display: flex;
    gap: 2px;
    margin-top: 9px;
}

.context-row select {
    width: 184px;
    height: 36px;
    padding: 0 14px;
    border: 1px solid #9aa5ad;
    border-radius: 4px;
    appearance: none;
    background-color: #eee;
    background-image: linear-gradient(to bottom left, #666 50%, transparent 50%), linear-gradient(to bottom right, #666 50%, transparent 50%);
    background-repeat: no-repeat;
    background-position: 167px 13px, 172px 13px;
    background-size: 5px 8px, 5px 8px;
    font: inherit;
    color: #555;
}

.context-row button {
    width: 42px;
    height: 36px;
    border: 1px solid #e5e5e5;
    border-radius: 4px;
    color: #ddd;
}

.features-head {
    display: flex;
    align-items: center;
    gap: 12px;
    height: 38px;
    padding: 0 25px 0 5px;
}

.features-head h2 {
    margin-right: auto;
}

.filter-row {
    display: flex;
    align-items: center;
    height: 38px;
    padding: 0 11px 0 12px;
}

.filter-row input {
    flex: 1;
    min-width: 0;
    height: 36px;
    margin-left: 15px;
    padding: 0 6px;
    border: 1px solid #bbb;
    border-radius: 3px;
    font-family: "Open Sans", sans-serif;
    font-size: 15px;
    font-style: italic;
}

.filter-row input::placeholder {
    font-style: italic;
    color: #777;
}

.feature-scroll {
    display: flex;
    height: 455px;
    margin-right: 6px;
    border-bottom: 1px solid var(--line);
}

.feature-list {
    display: flex;
    flex: 1;
    flex-direction: column;
    justify-content: flex-end;
    overflow: hidden;
}

.feature-list li {
    display: flex;
    align-items: center;
    gap: 6px;
    height: 30px;
    margin-bottom: 1px;
    padding-left: 5px;
}

.feature-list li:nth-child(odd) {
    margin-bottom: 2px;
}

.feature-list li svg {
    width: 20px;
    height: 20px;
}

.feature-list .hidden-item {
    color: var(--muted);
}

.feature-list .hidden-item svg {
    opacity: 0.45;
}

.feature-list .hovered {
    border-bottom: 1px solid #8ccdf0;
    background: #eaf0f5;
}

.feature-list .selected {
    background: #b0ddf5;
    font-weight: 700;
}

.rollback {
    flex: none;
    height: 9px;
    margin: 11px 7px 11px 6px;
    background: #c1c1c1;
}

.scrollbar {
    display: flex;
    flex-direction: column;
    align-items: center;
    width: 18px;
    padding: 8px 0;
    background: #f0f0f0;
}

.scrollbar span {
    width: 14px;
    height: 89px;
    margin: auto 0 6px;
    background: #c1c1c1;
}

.scrollbar b {
    border: 4px solid transparent;
}

.scrollbar .up {
    border-top: none;
    border-bottom-color: #444;
}

.scrollbar .down {
    border-bottom: none;
    border-top-color: #999;
}

.parts h3 {
    display: flex;
    align-items: center;
    gap: 8px;
    height: 33px;
    padding-left: 5px;
    font-size: 16px;
    font-weight: 400;
}

.parts ul {
    margin-left: 11px;
    padding-left: 14px;
    border-left: 1px solid var(--line);
}

.parts li {
    height: 31px;
    line-height: 31px;
    color: var(--muted);
}

.parts li:nth-child(even) {
    margin-bottom: 1px;
}

.parts .visible {
    color: var(--text);
}

.parts ul::after {
    content: "";
    display: block;
    width: 12px;
    height: 1px;
    margin-left: -20px;
    background: var(--line);
}

/* graphics area */
.viewport {
    position: relative;
    flex: 1;
    min-width: 0;
}

.model {
    display: block;
    width: 100%;
    height: 100%;
}

.dialog {
    position: absolute;
    top: 4px;
    left: -1px;
    width: 267px;
    background: #fff;
    box-shadow: 0 3px 12px rgba(0, 0, 0, 0.3);
}

.dialog-head {
    display: flex;
    height: 35px;
    border-bottom: 1px solid var(--line);
}

.dialog-head h2 {
    flex: 1;
    padding-left: 7px;
    font-size: 15px;
    line-height: 36px;
}

.accept {
    width: 34px;
    background: #009400;
}

.cancel {
    width: 34px;
}

.tabs {
    display: flex;
    height: 32px;
    border-bottom: 1px solid var(--line);
}

.tabs button {
    padding: 4px 12px 0;
    border-bottom: 2px solid transparent;
    color: #444;
}

.tabs .active {
    border-color: var(--blue);
    color: var(--blue);
    font-weight: 700;
}

.type-tabs button {
    width: 53%;
}

.type-tabs .active {
    width: 47%;
}

.op-tabs {
    justify-content: space-around;
    height: 31px;
    font-size: 15px;
}

.query {
    margin: 5px 4px 0 3px;
    padding-top: 6px;
    border: 1px solid #ddd;
    border-radius: 2px;
    overflow: hidden;
}

.query p {
    padding-left: 6px;
    font-size: 12px;
    line-height: 16px;
    color: #666;
}

.query li {
    display: flex;
    align-items: center;
    justify-content: space-between;
    height: 29px;
    padding: 0 12px 0 8px;
}

.query svg {
    width: 12px;
    height: 12px;
    color: #aaa;
}

.query-active {
    height: 125px;
    padding-top: 8px;
    border: 1px solid var(--blue);
    background: #d9eff8;
}

.query-active li:nth-child(even) {
    background: #e3f4fb;
}

.end-type {
    position: relative;
    display: flex;
    align-items: center;
    height: 38px;
    margin-right: 3px;
}

.end-type select {
    flex: 1;
    height: 38px;
    padding: 6px 0 0 7px;
    border: none;
    border-bottom: 1px solid #ddd;
    appearance: none;
    background: #fff;
    font: inherit;
    font-size: 17px;
    color: inherit;
}

.end-type .caret {
    position: absolute;
    right: 36px;
    top: 20px;
    pointer-events: none;
}

.end-type button {
    width: 29px;
    padding-top: 5px;
}

.depth {
    display: flex;
    align-items: center;
    height: 31px;
    padding: 0 32px 0 5px;
}

.depth label {
    width: 45px;
    padding-top: 4px;
    font-size: 15px;
    color: #777;
}

.depth input {
    flex: 1;
    min-width: 0;
    height: 31px;
    padding: 6px 4px 0;
    border: none;
    border-bottom: 1px solid #ddd;
    font: inherit;
    color: inherit;
    text-align: right;
}

.check {
    display: flex;
    align-items: center;
    gap: 5px;
    height: 33px;
    padding-left: 4px;
    color: #777;
}

.depth + .check {
    margin-top: 2px;
}

.check input {
    width: 15px;
    height: 15px;
    margin: 0;
    border: 1px solid #ccc;
    border-radius: 3px;
    appearance: none;
    background: #fff;
}

.dialog-foot {
    display: flex;
    align-items: center;
    justify-content: space-between;
    height: 35px;
    padding: 11px 5px 0 8px;
}

.dialog-foot input {
    width: 136px;
    height: 16px;
    margin: 0;
    appearance: none;
    background: linear-gradient(#777, #777) no-repeat center / 100% 2px;
}

.dialog-foot input::-webkit-slider-thumb {
    width: 14px;
    height: 14px;
    border: 1px solid #666;
    border-radius: 50%;
    appearance: none;
    background: #fff;
}

.view-cube {
    position: absolute;
    top: 8px;
    right: 0;
}

.side-tabs {
    position: absolute;
    top: 385px;
    right: 0;
    width: 39px;
    border: 1px solid #bbb;
    border-right: none;
    background: #fff;
}

.side-tabs button {
    position: relative;
    width: 38px;
    height: 40px;
}

.side-tabs button + button {
    border-top: 1px solid #bbb;
}

.side-tabs svg {
    width: 24px;
    height: 24px;
}

.side-tabs .corner-grid {
    position: absolute;
    top: 6px;
    left: 7px;
    width: 12px;
    height: 12px;
}

/* document tabs */
.doc-tabs {
    display: flex;
    flex: none;
    gap: 2px;
    height: 36px;
    background: #d0d0d0;
}

.doc-tabs .add {
    width: 44px;
}

.doc-tabs a {
    display: flex;
    align-items: center;
    gap: 4px;
    width: 244px;
    height: 33px;
    padding-left: 13px;
    border-radius: 0 0 6px 6px;
    background: #e8e8e8;
    box-shadow: 0 1px 2px #aaa;
    font-size: 17px;
    color: #666;
}

.doc-tabs a svg {
    width: 23px;
    height: 23px;
}

.doc-tabs .active {
    height: 35px;
    border-bottom: 3px solid var(--blue);
    background: #fff;
    color: #222;
}
```
